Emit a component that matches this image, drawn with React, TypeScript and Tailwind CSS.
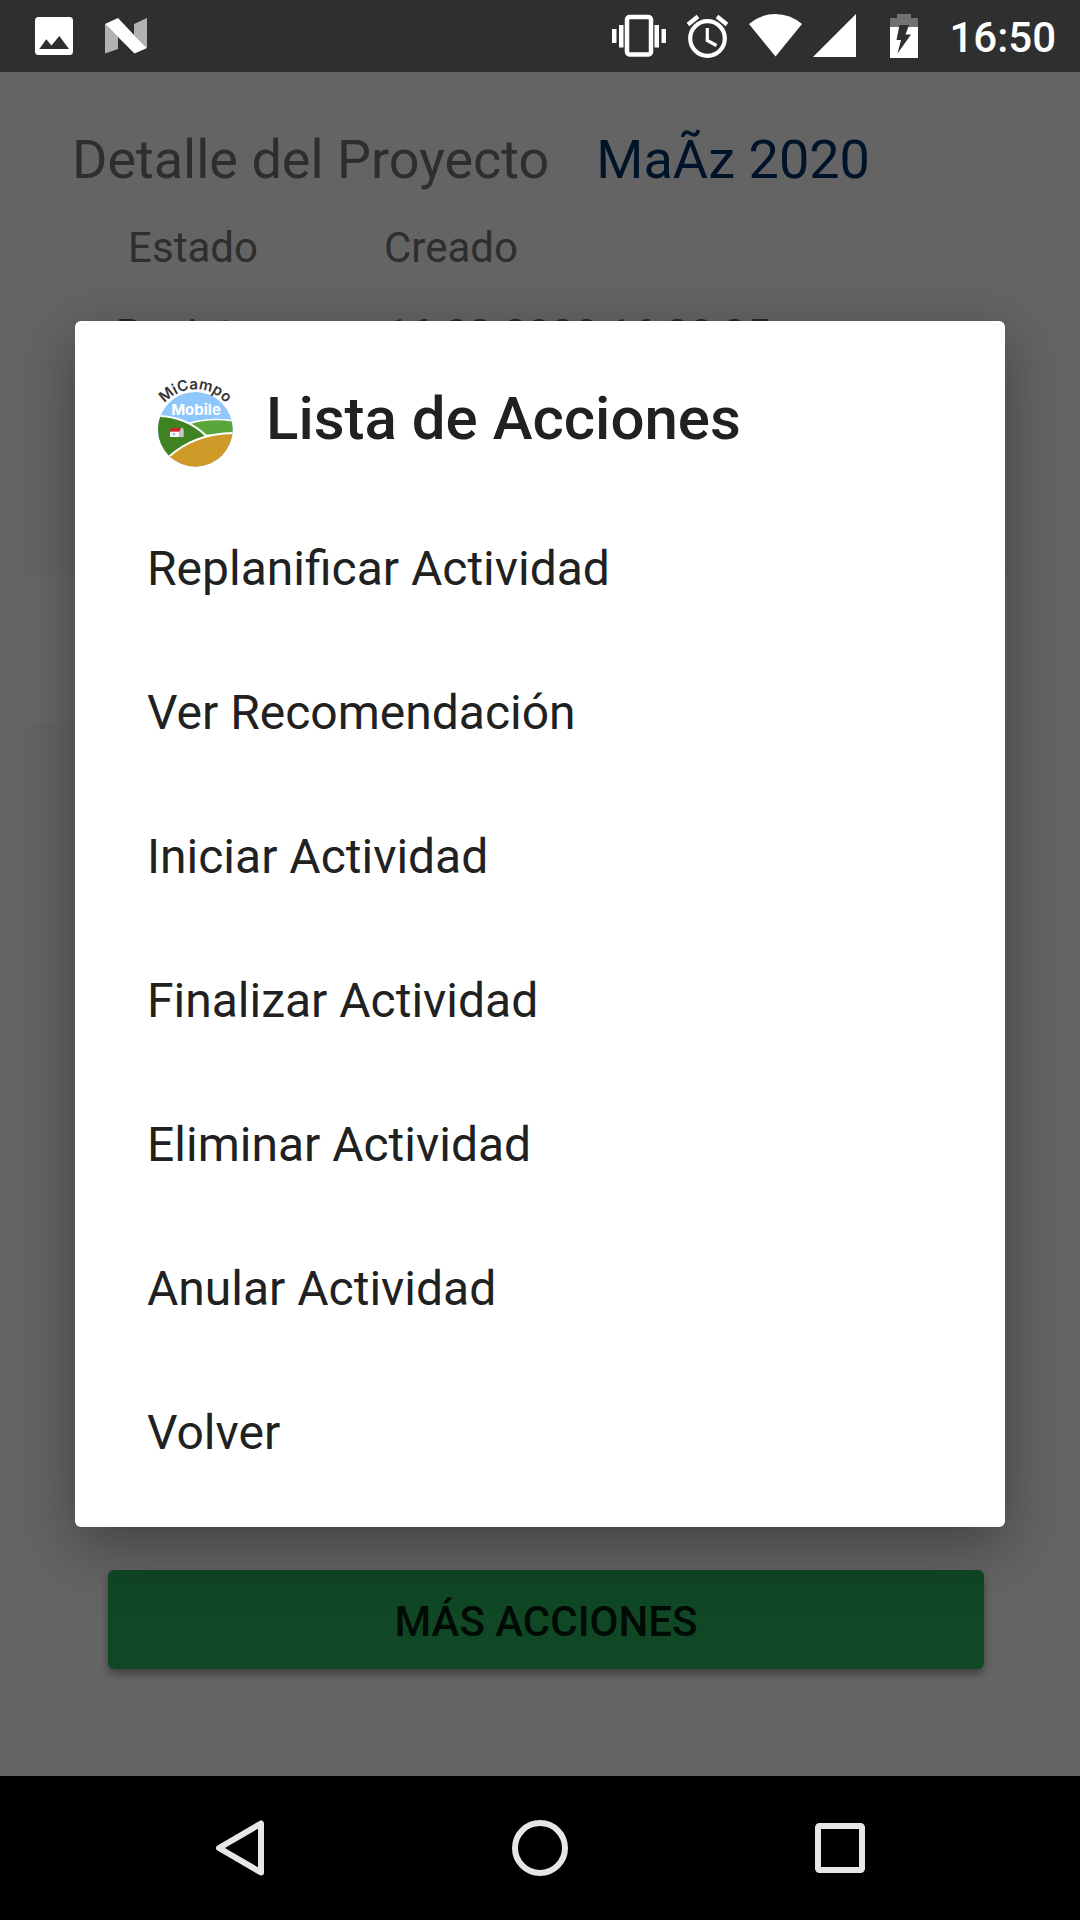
const ACTIONS = [
  "Replanificar Actividad",
  "Ver Recomendación",
  "Iniciar Actividad",
  "Finalizar Actividad",
  "Eliminar Actividad",
  "Anular Actividad",
  "Volver",
];

function StatusBar() {
  return (
    <header className="flex h-[72px] shrink-0 items-center bg-[#2f2f2f] pr-6 pl-[35px] text-white">
      <svg className="h-11 w-[38px]" viewBox="35 14 38 44" aria-hidden="true">
        <rect x="35" y="17" width="38" height="38" rx="3.5" fill="#fff" />
        <path d="M39.3 49 46.3 39.2 51.5 45.4 59.3 36 69 49Z" fill="#2f2f2f" />
      </svg>
      <svg className="ml-8 h-11 w-[42px]" viewBox="105 14 42 44" aria-hidden="true">
        <path d="M105 24 118 37V49L105 53.5ZM134 24 147 18V48L134 35Z" fill="#b2b2b2" />
        <path d="M105 24 118 18 134.500 35.500 147 48 134.500 53.500Z" fill="#fff" />
      </svg>

      <div className="ml-auto flex items-center">
        <svg className="h-11 w-[54px]" viewBox="612 14 54 44" aria-hidden="true">
          <rect x="627" y="17" width="24" height="37.500" rx="2.500" fill="none" stroke="#fff" strokeWidth="4.500" />
          <path d="M612 29h4.500v14H612ZM619 25h4.500v22.500H619ZM654.500 25h4.500v22.500h-4.500ZM661.500 29h4.500v14h-4.500Z" fill="#fff" />
        </svg>
        <svg className="ml-5 h-11 w-[43px]" viewBox="686 14 43 44" aria-hidden="true">
          <g fill="none" stroke="#fff">
            <circle cx="707.500" cy="38.500" r="17.300" strokeWidth="4.200" />
            <path d="M707.300 28v12.500l9.200 5" strokeWidth="3.200" />
            <path d="M688 24.500 698 16.500M727 24.500 717 16.500" strokeWidth="4.200" />
          </g>
        </svg>
        <svg className="ml-5 h-11 w-[53px]" viewBox="749 14 53 44" aria-hidden="true">
          <path d="M749 24Q761 14 775.500 14T802 24L775.500 56.500Z" fill="#fff" />
        </svg>
        <svg className="ml-[11px] h-11 w-[43px]" viewBox="813 14 43 44" aria-hidden="true">
          <path d="M813 57 856 14V57Z" fill="#fff" />
        </svg>
        <svg className="ml-[34px] h-11 w-7" viewBox="890 14 28 44" aria-hidden="true">
          <path d="M897 14h14v4h7v9H890v-9h7Z" fill="#717171" />
          <path d="M890 27h28v31H890Z" fill="#fff" />
          <path d="M899.500 25H909L905.500 34.500H911L897.500 53.500 901 40H896.500Z" fill="#2f2f2f" />
        </svg>
        <time className="ml-[31px] pt-1 text-[42px] leading-[48px] font-medium">16:50</time>
      </div>
    </header>
  );
}

function Logo() {
  return (
    <svg className="h-[100px] w-24 shrink-0" viewBox="48 26 288 300" role="img" aria-label="MiCampo Mobile">
      <defs>
        <clipPath id="field">
          <circle cx="196" cy="207" r="112" />
        </clipPath>
        <path id="arc" d="M76 207A120 120 0 0 1 316 207" />
      </defs>
      <g clipPath="url(#field)">
        <rect x="80" y="90" width="232" height="232" fill="#8fc6fc" />
        <path d="M176 190Q240 170 312 182V225H190Z" fill="#5aa63a" stroke="#fff" strokeWidth="5" />
        <path d="M76 167Q165 165 229 227L120 300H70Z" fill="#3f8222" stroke="#fff" strokeWidth="6" />
        <path d="M112 293Q195 217 316 218V330H112Z" fill="#d09a28" stroke="#fff" strokeWidth="6" />
      </g>
      <path d="M118 215 124 203H153L148 215Z" fill="#d3202b" />
      <path d="M148 215 154 201 161 206V230H148Z" fill="#c4c8cb" />
      <path d="M120 214H148V230H120Z" fill="#f6f8fa" />
      <path d="M128 219h8v5h-8Z" fill="#86b9de" />
      <g fontFamily="Inter, sans-serif" textAnchor="middle">
        <text fontSize="45" fontWeight="600" fill="#333">
          <textPath href="#arc" startOffset="50%">MiCampo</textPath>
        </text>
        <text x="198" y="164" fontSize="45" fontWeight="700" fill="#fff">Mobile</text>
      </g>
    </svg>
  );
}

function ActionsDialog() {
  return (
    <div className="absolute inset-0 flex items-center justify-center bg-black/60 px-[75px]">
      <div
        role="dialog"
        aria-modal="true"
        aria-labelledby="dialog-title"
        className="w-full rounded-md bg-white pb-[22px] text-[#212121] shadow-[0_18px_60px_rgba(0,0,0,0.35)]"
      >
        <div className="flex items-center gap-6 px-[71px] pt-12 pb-7">
          <Logo />
          <h2 id="dialog-title" className="text-[60px] leading-[72px] font-medium">
            Lista de Acciones
          </h2>
        </div>
        <ul>
          {ACTIONS.map((action) => (
            <li key={action}>
              <button type="button" className="h-36 w-full px-[72px] text-left text-[48px] leading-[56px]">
                {action}
              </button>
            </li>
          ))}
        </ul>
      </div>
    </div>
  );
}

function NavigationBar() {
  return (
    <nav className="flex h-36 shrink-0 items-center justify-center gap-[244px] bg-black">
      <button type="button" aria-label="Atrás">
        <svg className="size-14" viewBox="0 0 56 56">
          <path d="M49 3.500V52.500L7 28Z" fill="none" stroke="#e6e6e6" strokeWidth="6" strokeLinejoin="round" />
        </svg>
      </button>
      <button type="button" aria-label="Inicio">
        <svg className="size-14" viewBox="0 0 56 56">
          <circle cx="28" cy="28" r="25" fill="none" stroke="#e6e6e6" strokeWidth="6" />
        </svg>
      </button>
      <button type="button" aria-label="Recientes">
        <svg className="size-14" viewBox="0 0 56 56">
          <rect x="6" y="6" width="44" height="44" rx="1.500" fill="none" stroke="#e6e6e6" strokeWidth="6" />
        </svg>
      </button>
    </nav>
  );
}

export default function App() {
  return (
    <div className="flex min-h-screen flex-col font-[Roboto,sans-serif]">
      <StatusBar />
      <main className="relative flex flex-1 flex-col bg-[#fafafa] text-[#737373]">
        <div className="px-[72px] pt-14">
          <h1 className="flex gap-[47px] text-[54px] leading-[64px]">
            <span>Detalle del Proyecto</span>
            <span className="text-[#003468]">MaÃz 2020</span>
          </h1>
          <table className="mt-8 text-[42px] leading-[48px]">
            <thead>
              <tr>
                <th className="w-[242px] p-0 font-normal">Estado</th>
                <th className="p-0 pl-[70px] text-left font-normal">Creado</th>
              </tr>
            </thead>
            <tbody className="text-[#606060]">
              <tr>
                <td className="p-0 pt-[39px] text-center">Registro</td>
                <td className="p-0 pt-[39px] pl-[72px]">16-03-2020 16:28:35</td>
              </tr>
            </tbody>
          </table>
        </div>
        <div className="mt-[215px] mr-[72px] ml-6 bg-[#e0e0e0]">
          <div className="h-[150px] rounded bg-white" />
        </div>
        <button
          type="button"
          className="mt-auto mr-24 mb-[107px] ml-[108px] h-[99px] rounded-md bg-[#28b25a] pt-1 text-[42px] leading-[48px] font-medium text-black/87 shadow-[0_5px_8px_rgba(0,0,0,0.35)]"
        >
          MÁS ACCIONES
        </button>
        <ActionsDialog />
      </main>
      <NavigationBar />
    </div>
  );
}
